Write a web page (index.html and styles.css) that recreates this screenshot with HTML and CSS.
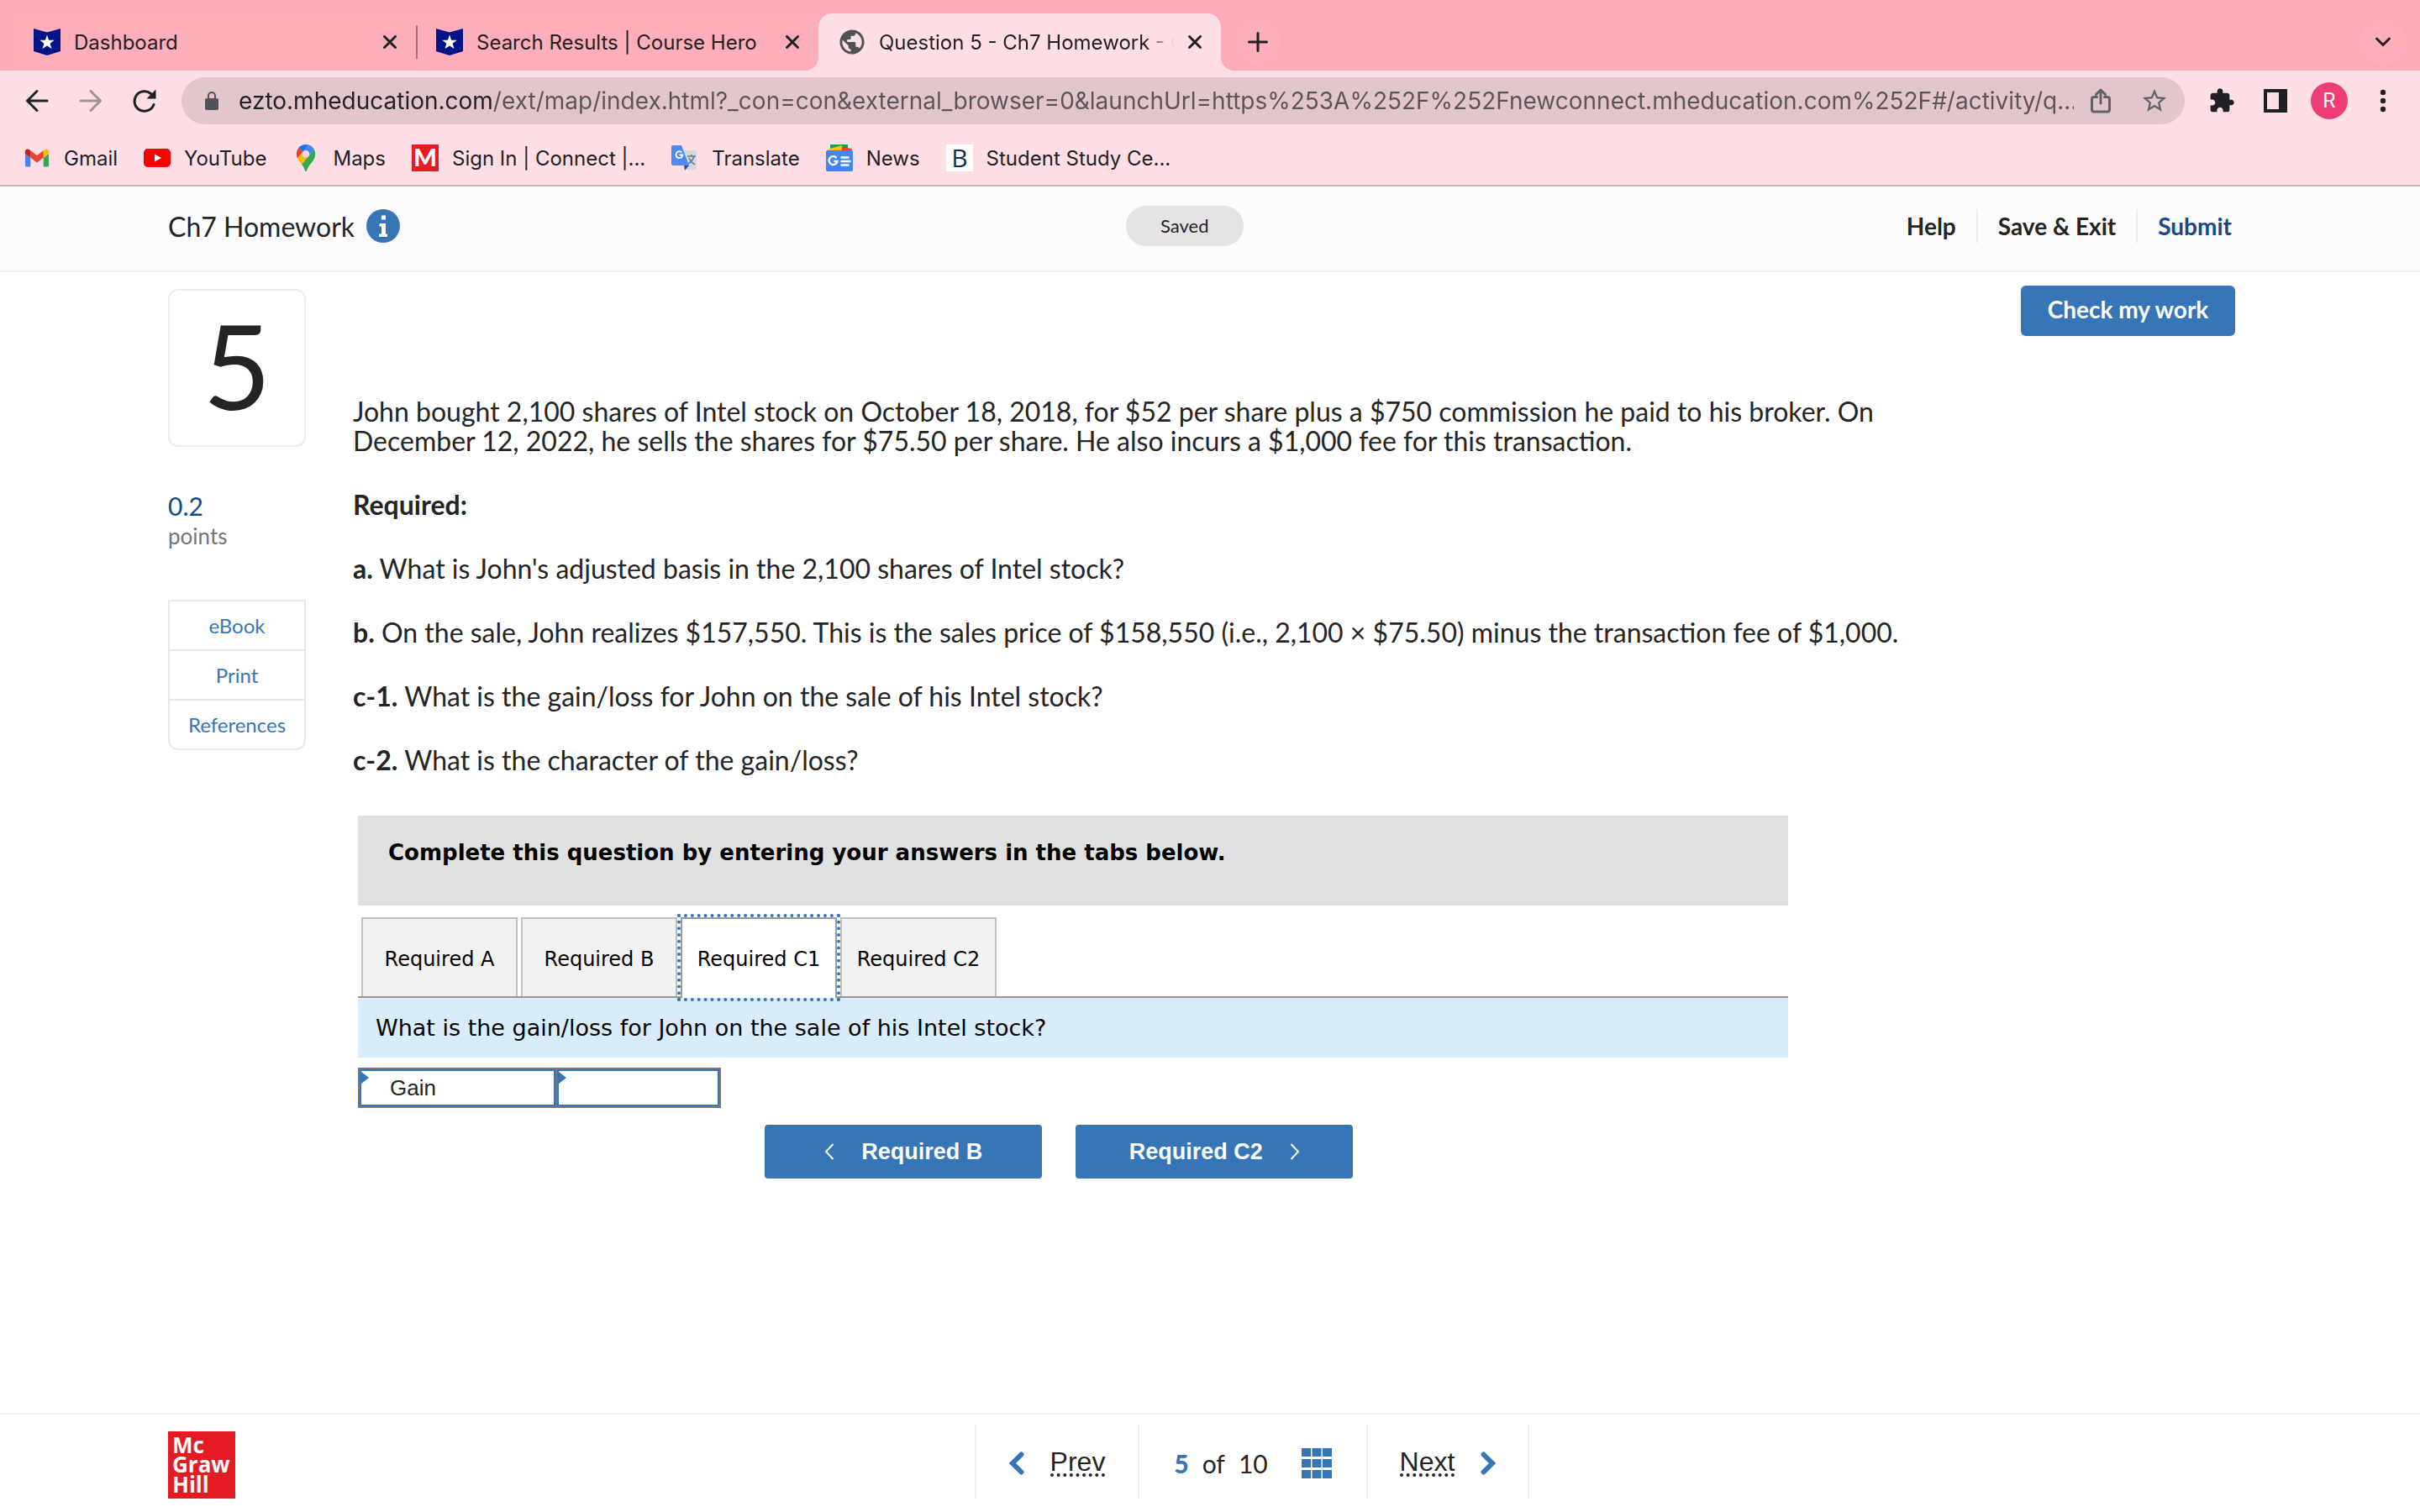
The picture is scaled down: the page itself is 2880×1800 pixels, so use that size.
FILE: index.html
```html
<!DOCTYPE html>
<html lang="en">
<head>
    <meta charset="UTF-8">
    <meta name="viewport" content="width=device-width, initial-scale=1.0">
    <title>Question 5 - Ch7 Homework</title>
    <link rel="stylesheet" href="styles.css">
</head>
<body>
    <!-- Browser -->
    <header class="browser">
        <div class="tab-strip">
            <div class="tab">
                <svg class="icon" viewBox="0 0 32 32" aria-hidden="true"><path fill="#001489" d="M0 0l16 4.500L32 0v27l-16 5L0 27z"/><path fill="#fff" d="M16 7.500l2.200 6.200 6.600.1-5.200 4 1.900 6.300-5.500-3.700-5.500 3.700 1.900-6.300-5.200-4 6.600-.1z"/></svg>
                <span class="tab-title">Dashboard</span>
                <button class="tab-close" aria-label="Close tab"><svg width="16" height="16" viewBox="0 0 16 16"><path d="M1.500 1.500l13 13M14.500 1.500l-13 13"/></svg></button>
            </div>
            <div class="tab divided">
                <svg class="icon" viewBox="0 0 32 32" aria-hidden="true"><path fill="#001489" d="M0 0l16 4.500L32 0v27l-16 5L0 27z"/><path fill="#fff" d="M16 7.500l2.200 6.200 6.600.1-5.200 4 1.900 6.300-5.500-3.700-5.500 3.700 1.900-6.300-5.200-4 6.600-.1z"/></svg>
                <span class="tab-title">Search Results | Course Hero</span>
                <button class="tab-close" aria-label="Close tab"><svg width="16" height="16" viewBox="0 0 16 16"><path d="M1.500 1.500l13 13M14.500 1.500l-13 13"/></svg></button>
            </div>
            <div class="tab active">
                <svg class="icon" viewBox="1 1 22 22" aria-hidden="true"><path fill="#4f5357" d="M12 2C6.480 2 2 6.480 2 12s4.480 10 10 10 10-4.480 10-10S17.520 2 12 2zm-1 17.930c-3.950-.49-7-3.850-7-7.930 0-.62.08-1.210.21-1.790L9 15v1c0 1.100.9 2 2 2v1.930zm6.900-2.540c-.26-.81-1-1.390-1.900-1.390h-1v-3c0-.55-.45-1-1-1H8v-2h2c.55 0 1-.45 1-1V7h2c1.100 0 2-.9 2-2v-.41c2.930 1.190 5 4.060 5 7.410 0 2.080-.8 3.970-2.100 5.390z"/></svg>
                <span class="tab-title fade">Question 5 - Ch7 Homework - Connect</span>
                <button class="tab-close" aria-label="Close tab"><svg width="16" height="16" viewBox="0 0 16 16"><path d="M1.500 1.500l13 13M14.500 1.500l-13 13"/></svg></button>
            </div>
            <button class="round-button" aria-label="New tab"><svg width="24" height="24" viewBox="0 0 24 24"><path d="M12 1.500v21M1.500 12h21"/></svg></button>
            <button class="round-button search-tabs" aria-label="Search tabs"><svg width="18" height="12" viewBox="0 0 18 12"><path d="M1.500 2L9 9.500 16.500 2"/></svg></button>
        </div>

        <div class="toolbar">
            <button class="tool" aria-label="Back"><svg width="28" height="28" viewBox="0 0 28 28"><path class="line" d="M26 14H3M14 2.500L2.500 14 14 25.500"/></svg></button>
            <button class="tool" aria-label="Forward" disabled><svg width="28" height="28" viewBox="0 0 28 28"><path class="line" d="M2 14h23M14 2.500L25.500 14 14 25.500"/></svg></button>
            <button class="tool" aria-label="Reload"><svg width="28" height="28" viewBox="0 0 28 28"><path class="line" d="M25 18.500A11.800 11.800 0 1 1 21.500 5.500"/><path fill="#202124" d="M27.500.5v11H16.500z"/></svg></button>
            <div class="omnibox">
                <svg width="16" height="22" viewBox="0 0 16 22" aria-hidden="true"><rect y="8" width="16" height="14" rx="2" fill="#4f5357"/><path d="M4 9V5a4 4 0 0 1 8 0v4" fill="none" stroke="#4f5357" stroke-width="2"/></svg>
                <input class="url" type="text" aria-label="Address" value="ezto.mheducation.com/ext/map/index.html?_con=con&amp;external_browser=0&amp;launchUrl=https%253A%252F%252Fnewconnect.mheducation.com%252F#/activity/q...">
                <button class="tool" aria-label="Share"><svg width="24" height="30" viewBox="0 0 24 30"><path class="gray-line" d="M7.500 10.500H4a2.500 2.500 0 0 0-2.500 2.500v12.500A2.500 2.500 0 0 0 4 28h16a2.500 2.500 0 0 0 2.500-2.500V13a2.500 2.500 0 0 0-2.500-2.500h-3.500M12 18V2.500M6.500 7.500L12 2l5.500 5.500"/></svg></button>
                <button class="tool" aria-label="Bookmark this tab"><svg width="34" height="34" viewBox="0 0 24 24"><path fill="#5f6368" d="M22 9.240l-7.190-.62L12 2 9.190 8.630 2 9.240l5.460 4.730L5.820 21 12 17.270 18.180 21l-1.630-7.030L22 9.240zM12 15.400l-3.760 2.270 1-4.280-3.320-2.880 4.380-.38L12 6.100l1.710 4.040 4.380.38-3.320 2.880 1 4.280L12 15.400z"/></svg></button>
            </div>
            <button class="tool" aria-label="Extensions"><svg width="32" height="32" viewBox="0 0 24 24"><path fill="#202124" d="M20.500 11H19V7c0-1.100-.9-2-2-2h-4V3.500C13 2.120 11.880 1 10.500 1S8 2.120 8 3.500V5H4c-1.100 0-1.990.9-1.990 2v3.800H3.500c1.490 0 2.700 1.210 2.700 2.700s-1.210 2.700-2.700 2.700H2V20c0 1.100.9 2 2 2h3.800v-1.500c0-1.490 1.210-2.700 2.700-2.700 1.490 0 2.700 1.210 2.700 2.700V22H17c1.100 0 2-.9 2-2v-4h1.500c1.380 0 2.500-1.120 2.500-2.500S21.880 11 20.500 11z"/></svg></button>
            <button class="tool" aria-label="Side panel"><svg width="28" height="28" viewBox="0 0 28 28"><path fill="#202124" fill-rule="evenodd" d="M0 0h28v28H0zM4 4v20h14V4z"/></svg></button>
            <button class="tool" aria-label="Profile"><span class="avatar">R</span></button>
            <button class="tool" aria-label="Menu"><svg width="8" height="28" viewBox="0 0 8 28" fill="#202124"><circle cx="4" cy="4" r="3.200"/><circle cx="4" cy="14" r="3.200"/><circle cx="4" cy="24" r="3.200"/></svg></button>
        </div>

        <nav class="bookmarks">
            <a href="#">
                <svg class="icon" viewBox="46 34 100 82" aria-hidden="true"><path fill="#4285f4" d="M58 108h14V74L52 59v43c0 3.320 2.690 6 6 6"/><path fill="#34a853" d="M120 108h14c3.320 0 6-2.690 6-6V59l-20 15"/><path fill="#fbbc04" d="M120 48v26l20-15v-8c0-7.420-8.470-11.650-14.400-7.200"/><path fill="#ea4335" d="M72 74V48l24 18 24-18v26L96 92"/><path fill="#c5221f" d="M52 51v8l20 15V48l-5.600-4.200c-5.940-4.450-14.400-.22-14.400 7.200"/></svg>
                Gmail
            </a>
            <a href="#">
                <svg class="icon" viewBox="0 0 32 32" aria-hidden="true"><rect y="5" width="32" height="22" rx="5" fill="#f00"/><path fill="#fff" d="M13 11.500v9l8-4.500z"/></svg>
                YouTube
            </a>
            <a href="#">
                <svg class="icon" viewBox="0 0 92.300 132.300" aria-hidden="true"><path fill="#1a73e8" d="M60.200 2.200C55.800.8 51 0 46.100 0 32 0 19.300 6.400 10.800 16.500l21.800 18.300L60.200 2.200z"/><path fill="#ea4335" d="M10.800 16.500C4.100 24.500 0 34.900 0 46.100c0 8.700 1.700 15.700 4.600 22l28-33.300-21.800-18.300z"/><path fill="#4285f4" d="M46.200 28.500c9.800 0 17.700 7.900 17.700 17.700 0 4.300-1.600 8.300-4.200 11.400 0 0 13.900-16.600 27.500-32.700-5.600-10.800-15.300-19-27-22.700L32.600 34.800c3.300-3.800 8.100-6.300 13.600-6.300"/><path fill="#fbbc04" d="M46.200 63.800c-9.800 0-17.700-7.900-17.700-17.700 0-4.300 1.500-8.300 4.100-11.300l-28 33.300c4.800 10.600 12.800 19.200 21 29.900l34.100-40.500c-3.300 3.900-8.100 6.300-13.500 6.300"/><path fill="#34a853" d="M59.100 109.200c15.400-24.100 33.300-35 33.300-63 0-7.700-1.900-14.900-5.200-21.300L25.600 98c2.600 3.400 5.300 7.300 7.900 11.300 9.400 14.500 6.800 23.100 12.800 23.100s3.400-8.700 12.800-23.200"/></svg>
                Maps
            </a>
            <a href="#">
                <svg class="icon" viewBox="0 0 32 32" aria-hidden="true"><path fill="#e51b23" d="M0 0h32v32H0z"/><text class="letter-m" x="16" y="26" text-anchor="middle">M</text></svg>
                Sign In | Connect |...
            </a>
            <a href="#">
                <svg class="icon" viewBox="0 0 32 32" aria-hidden="true"><path fill="#d5d8da" d="M13 7h15a2 2 0 0 1 2 2v19a2 2 0 0 1-2 2H18z"/><path d="M19 14h10M24 12v2M27 14c-1 4-4 7-7 9M21 16c1 3 4 6 7 8" fill="none" stroke="#607988" stroke-width="1.500"/><path fill="#3949ab" d="M15 25h6l-5 6z"/><path fill="#4c8bf5" d="M2 1h10l9 24H2a2 2 0 0 1-2-2V3a2 2 0 0 1 2-2z"/><path d="M12.500 9.500a4 4 0 1 0 1 3H9.500" fill="none" stroke="#fff" stroke-width="1.800"/></svg>
                Translate
            </a>
            <a href="#">
                <svg class="icon" viewBox="0 0 32 32" aria-hidden="true"><path fill="#1e9e4a" d="M5 0h21v8H5z"/><path fill="#ffc017" d="M1 6l18-5 3 8H2z"/><path fill="#ea4335" d="M19 3l12 2-1 5H18z"/><rect y="7" width="32" height="25" rx="2" fill="#4285f4"/><path d="M12.500 16a5 5 0 1 0 1 4H9.500M17.500 15.500h10M17.500 20h12M17.500 24.500h10" fill="none" stroke="#fff" stroke-width="2.400"/></svg>
                News
            </a>
            <a href="#">
                <svg class="icon" viewBox="0 0 32 32" aria-hidden="true"><path fill="#fff" d="M0 0h32v32H0z"/><text class="letter-b" x="16" y="27" text-anchor="middle">B</text></svg>
                Student Study Ce...
            </a>
        </nav>
    </header>

    <!-- Assignment header -->
    <header class="assignment">
        <div class="assignment-title">
            <h1>Ch7 Homework</h1>
            <button class="info" aria-label="Assignment information"><svg width="40" height="40" viewBox="0 0 40 40"><circle cx="20" cy="20" r="20" fill="#3776b6"/><path fill="#fff" d="M18 7.500h5v5h-5zM15.500 17H23v12.500h2V33H15v-3.500h3V20.500h-2.500z"/></svg></button>
        </div>
        <span class="saved">Saved</span>
        <nav class="assignment-links">
            <a href="#">Help</a>
            <a href="#">Save &amp; Exit</a>
            <a href="#" class="submit">Submit</a>
        </nav>
    </header>

    <main class="question">
        <aside class="sidebar">
            <div class="number">5</div>
            <div class="points"><strong>0.2</strong>points</div>
            <nav class="resources">
                <a href="#">eBook</a>
                <a href="#">Print</a>
                <a href="#">References</a>
            </nav>
        </aside>

        <section class="content">
            <button class="check">Check my work</button>

            <div class="prompt">
                <p>John bought 2,100 shares of Intel stock on October 18, 2018, for $52 per share plus a $750 commission he paid to his broker. On December 12, 2022, he sells the shares for $75.50 per share. He also incurs a $1,000 fee for this transaction.</p>
                <p><b>Required:</b></p>
                <p><b>a.</b> What is John's adjusted basis in the 2,100 shares of Intel stock?</p>
                <p><b>b.</b> On the sale, John realizes $157,550. This is the sales price of $158,550 (i.e., 2,100 × $75.50) minus the transaction fee of $1,000.</p>
                <p><b>c-1.</b> What is the gain/loss for John on the sale of his Intel stock?</p>
                <p><b>c-2.</b> What is the character of the gain/loss?</p>
            </div>

            <div class="worksheet">
                <div class="instructions">Complete this question by entering your answers in the tabs below.</div>
                <div class="answer-tabs" role="tablist">
                    <button role="tab">Required A</button>
                    <button role="tab">Required B</button>
                    <button role="tab" class="selected" aria-selected="true">Required C1</button>
                    <button role="tab">Required C2</button>
                </div>
                <div class="answer-question">What is the gain/loss for John on the sale of his Intel stock?</div>
                <table class="answers">
                    <tr>
                        <td class="answer-type">
                            <select aria-label="Gain or loss">
                                <option>Gain</option>
                                <option>Loss</option>
                            </select>
                        </td>
                        <td><input type="text" aria-label="Amount"></td>
                    </tr>
                </table>
                <div class="steps">
                    <button><svg width="12" height="20" viewBox="0 0 12 20"><path d="M10.500 1L2 10l8.500 9"/></svg>Required B</button>
                    <button>Required C2<svg width="12" height="20" viewBox="0 0 12 20"><path d="M1.500 1L10 10l-8.500 9"/></svg></button>
                </div>
            </div>
        </section>
    </main>

    <!-- Footer -->
    <footer class="footer">
        <svg width="80" height="80" viewBox="0 0 80 80" role="img" aria-label="McGraw Hill"><path fill="#e51b23" d="M0 0h80v80H0z"/><g class="logo-text"><text x="5" y="26">Mc</text><text x="5" y="49">Graw</text><text x="5" y="73">Hill</text></g></svg>
        <nav class="pager">
            <a href="#" class="pager-step"><svg width="18" height="28" viewBox="0 0 18 28"><path d="M14.500 3.500L4 14l10.500 10.500"/></svg><span>Prev</span></a>
            <div class="pager-count">
                <strong>5</strong><span>of</span><span>10</span>
                <button aria-label="Question list"><svg width="36" height="36" viewBox="0 0 36 36" fill="#3776b6"><path d="M0 0h11v10H0zM12.500 0h11v10h-11zM25 0h11v10H25zM0 13h11v10H0zM12.500 13h11v10h-11zM25 13h11v10H25zM0 26h11v10H0zM12.500 26h11v10h-11zM25 26h11v10H25z"/></svg></button>
            </div>
            <a href="#" class="pager-step"><span>Next</span><svg width="18" height="28" viewBox="0 0 18 28"><path d="M3.500 3.500L14 14 3.500 24.500"/></svg></a>
        </nav>
    </footer>
</body>
</html>
```
FILE: styles.css
```css
* {
    box-sizing: border-box;
}

body {
    display: flex;
    flex-direction: column;
    min-height: 100vh;
    margin: 0;
    background: #fff;
    color: #242424;
    font-family: Lato, sans-serif;
    font-size: 32px;
}

a {
    color: inherit;
    text-decoration: none;
}

button {
    display: flex;
    align-items: center;
    justify-content: center;
    padding: 0;
    border: none;
    background: none;
    color: inherit;
    font: inherit;
    cursor: pointer;
}

/* Browser */
.browser {
    border-bottom: 2px solid #ccb0b7;
    background: #ffdfe5;
    color: #202124;
    font-family: Inter, sans-serif;
    font-size: 24px;
}

.icon {
    flex: none;
    width: 32px;
    height: 32px;
}

.tab-strip {
    display: flex;
    align-items: center;
    height: 84px;
    padding: 16px 0 0 16px;
    background: #ffabba;
}

.tab {
    position: relative;
    display: flex;
    flex: 0 1 479px;
    align-items: center;
    gap: 16px;
    min-width: 0;
    height: 68px;
    padding: 0 23px 0 24px;
    background: #ffaeba;
}

.tab.divided::before {
    content: "";
    position: absolute;
    left: 0;
    top: 14px;
    width: 2px;
    height: 40px;
    background: #b0707c;
}

.tab.active {
    border-radius: 16px 16px 0 0;
    background: #ffdfe5;
}

.tab.active::before,
.tab.active::after {
    content: "";
    position: absolute;
    bottom: 0;
    width: 16px;
    height: 16px;
}

.tab.active::before {
    left: -16px;
    background: radial-gradient(circle at 0 0, #ffaeba 16px, #ffdfe5 16px);
}

.tab.active::after {
    right: -16px;
    background: radial-gradient(circle at 100% 0, #ffabba 16px, #ffdfe5 16px);
}

.tab-title {
    flex: 1;
    overflow: hidden;
    white-space: nowrap;
}

.tab-title.fade {
    -webkit-mask-image: linear-gradient(to right, #000 90%, transparent);
    mask-image: linear-gradient(to right, #000 90%, transparent);
}

.tab-strip button path {
    fill: none;
    stroke: #202124;
    stroke-width: 3;
    stroke-linecap: round;
}

.round-button {
    width: 56px;
    height: 56px;
    margin-left: 16px;
    border-radius: 50%;
    background: #ffaeba;
}

.search-tabs {
    margin-left: auto;
    margin-right: 16px;
}

.toolbar {
    display: flex;
    align-items: center;
    height: 72px;
    padding: 0 12px;
}

.tool {
    flex: none;
    width: 64px;
    height: 56px;
}

.tool:disabled {
    opacity: 0.4;
}

.line,
.gray-line {
    fill: none;
    stroke: #202124;
    stroke-width: 3;
    stroke-linecap: round;
    stroke-linejoin: round;
}

.gray-line {
    stroke: #5f6368;
}

.omnibox {
    display: flex;
    flex: 1;
    align-items: center;
    height: 56px;
    margin: 0 12px;
    padding: 0 4px 0 28px;
    border-radius: 28px;
    background: #e2c6cb;
}

/* The host is darker than the rest of the address */
.url {
    flex: 1;
    min-width: 0;
    height: 40px;
    margin-left: 24px;
    padding: 0;
    border: none;
    outline: none;
    background: linear-gradient(to right, #202124 302px, #5b5457 302px);
    -webkit-background-clip: text;
    background-clip: text;
    color: transparent;
    font-family: Inter, sans-serif;
    font-size: 28px;
}

.avatar {
    width: 44px;
    border-radius: 50%;
    background: #ee3e78;
    color: #fff;
    line-height: 44px;
    text-align: center;
}

.bookmarks {
    display: flex;
    align-items: center;
    gap: 31px;
    height: 64px;
    padding: 0 28px;
}

.bookmarks a {
    display: flex;
    align-items: center;
    gap: 16px;
    white-space: nowrap;
}

.letter-m {
    fill: #fff;
    font: 900 29px Lato, sans-serif;
}

.letter-b {
    fill: #0b2f57;
    font: 30px "Open Sans", sans-serif;
}

/* Assignment header */
.assignment {
    display: grid;
    grid-template-columns: 49fr auto 51fr;
    align-items: center;
    height: 102px;
    padding: 0 214px 6px 200px;
    border-bottom: 2px solid #f0f0f0;
    background: #fcfcfc;
}

.assignment-title {
    display: flex;
    align-items: center;
    gap: 14px;
}

.assignment-title h1 {
    margin: 0;
    font-size: 32px;
    font-weight: 400;
}

.saved {
    width: 140px;
    border-radius: 24px;
    background: #e5e3e6;
    font-size: 22px;
    line-height: 48px;
    text-align: center;
}

.assignment-links {
    display: flex;
    justify-content: flex-end;
    font-size: 28px;
    font-weight: 700;
    line-height: 40px;
}

.assignment-links a {
    padding-left: 24px;
}

.assignment-links a + a {
    margin-left: 24px;
    border-left: 2px solid #ececec;
}

.assignment-links .submit {
    padding-right: 10px;
    color: #164a87;
}

/* Question */
.question {
    display: grid;
    flex: 1;
    grid-template-columns: 164px 1fr;
    gap: 56px;
    padding: 16px 220px 0 200px;
}

.sidebar {
    padding-top: 4px;
}

.number {
    padding-bottom: 8px;
    border: 2px solid #ededed;
    border-radius: 12px;
    font-size: 140px;
    line-height: 176px;
    text-align: center;
}

.points {
    margin-top: 52px;
    color: #757575;
    font-size: 26px;
    line-height: 36px;
}

.points strong {
    display: block;
    color: #164a87;
    font-size: 30px;
    font-weight: 400;
}

.resources {
    margin-top: 58px;
    border: 2px solid #e8e8e8;
    border-radius: 0 0 12px 12px;
    color: #3776b6;
    font-size: 24px;
    line-height: 57px;
    text-align: center;
}

.resources a {
    display: block;
}

.resources a + a {
    border-top: 2px solid #e8e8e8;
}

.check {
    width: 255px;
    height: 60px;
    margin: 0 0 72px auto;
    padding-bottom: 4px;
    border-radius: 6px;
    background: #3776b6;
    color: #fff;
    font-size: 28px;
    font-weight: 700;
}

.prompt {
    max-width: 1860px;
    line-height: 35px;
}

.prompt p {
    margin: 0 0 41px;
}

/* Answer worksheet */
.worksheet {
    width: 76%;
    margin: 49px 0 0 6px;
    color: #000;
    font-family: "DejaVu Sans", sans-serif;
    font-size: 26px;
}

.instructions {
    height: 107px;
    padding: 28px 36px;
    background: #e0e0e0;
    font-weight: 700;
    line-height: 32px;
}

.answer-tabs {
    display: flex;
    gap: 4px;
    height: 110px;
    padding: 14px 4px 0;
    border-bottom: 2px solid #959595;
}

.answer-tabs button {
    width: 186px;
    padding-top: 4px;
    border: 2px solid #c0c0c0;
    border-bottom: none;
    background: #f2f2f2;
    font-size: 24px;
}

.answer-tabs .selected {
    margin-bottom: -2px;
    padding-top: 2px;
    border-color: #999;
    outline: 4px dotted #3776b6;
    background: #fff;
    z-index: 1;
}

.answer-question {
    padding: 0 21px;
    background: #d9ecfa;
    font-size: 27px;
    line-height: 71px;
}

.answers {
    width: 432px;
    margin-top: 12px;
    border: 2px solid #777;
    border-collapse: collapse;
    table-layout: fixed;
}

.answers td {
    position: relative;
    height: 44px;
    padding: 0;
    border-left: 2px solid #777;
}

.answers td::before {
    content: "";
    position: absolute;
    left: 2px;
    top: 3px;
    border: 7px solid transparent;
    border-left: 9px solid #3776b6;
    border-right: none;
}

.answer-type {
    width: 235px;
}

.answers select,
.answers input {
    display: block;
    width: 100%;
    height: 44px;
    padding: 0 0 0 34px;
    border: 2px solid #3776b6;
    border-radius: 0;
    outline: none;
    appearance: none;
    background: #fff;
    color: #242424;
    font-family: "Liberation Sans", Arial, sans-serif;
    font-size: 26px;
}

.steps {
    display: flex;
    justify-content: center;
    gap: 40px;
    margin-top: 20px;
    padding-right: 34px;
}

.steps button {
    gap: 32px;
    width: 330px;
    height: 64px;
    border-radius: 4px;
    background: #3776b6;
    color: #fff;
    font-family: "Liberation Sans", Arial, sans-serif;
    font-size: 27px;
    font-weight: 700;
}

.steps path {
    fill: none;
    stroke: #fff;
    stroke-width: 2;
}

/* Footer */
.footer {
    display: flex;
    align-items: center;
    height: 118px;
    padding: 4px 180px 0 200px;
    border-top: 2px solid #f0f0f0;
}

.logo-text {
    fill: #fff;
    font: 700 26px "Open Sans", sans-serif;
}

.pager {
    display: flex;
    flex: 1;
    justify-content: center;
    height: 88px;
    margin-bottom: 8px;
}

.pager > * {
    display: flex;
    align-items: center;
    justify-content: center;
    padding-top: 4px;
    border-left: 2px solid #f0f0f0;
}

.pager > :last-child {
    border-right: 2px solid #f0f0f0;
}

.pager-step {
    gap: 31px;
    width: 194px;
    font-family: "Liberation Sans", Arial, sans-serif;
    font-size: 32px;
}

.pager-step span {
    border-bottom: 4px dotted #242424;
    line-height: 28px;
}

.pager-step path {
    fill: none;
    stroke: #3776b6;
    stroke-width: 6;
    stroke-linecap: round;
}

.pager-count {
    gap: 16px;
    width: 272px;
    font-size: 30px;
}

.pager-count strong {
    color: #3776b6;
    font-weight: 900;
}

.pager-count button {
    margin-left: 24px;
}
```
